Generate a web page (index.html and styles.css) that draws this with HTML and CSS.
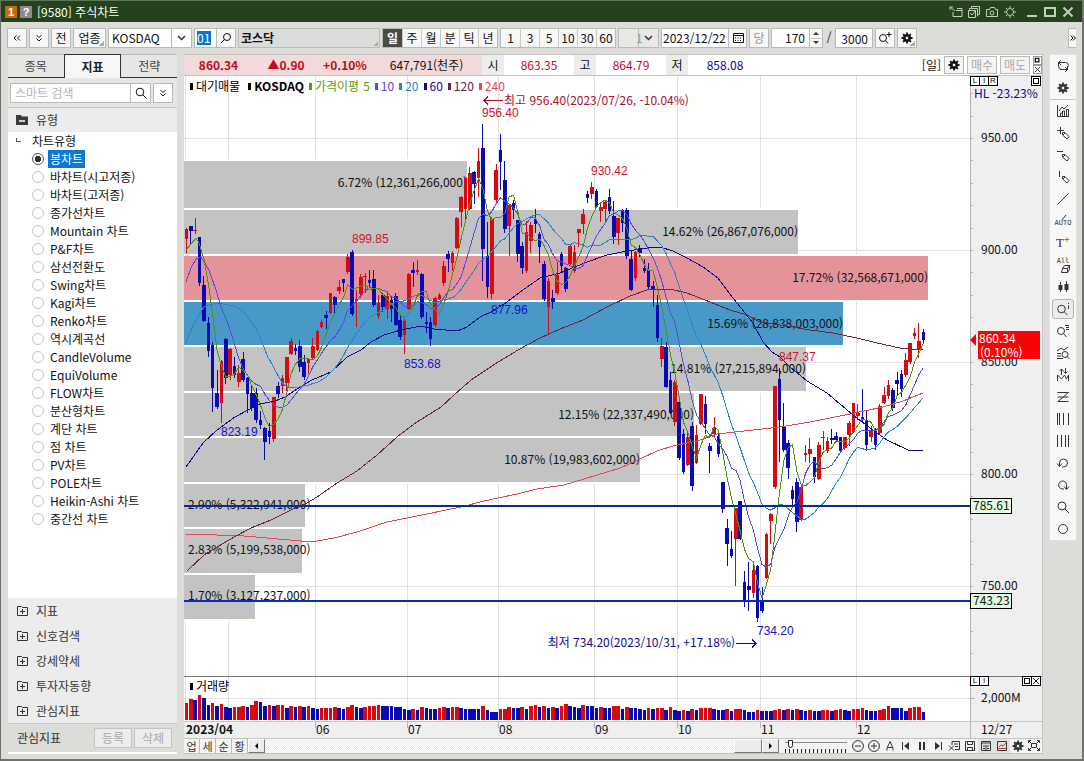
FILE: index.html
```html
<!DOCTYPE html>
<html lang="ko">
<head>
<meta charset="utf-8">
<title>[9580] 주식차트</title>
<link rel="stylesheet" href="styles.css">
</head>
<body>
<svg class="symbols" aria-hidden="true">
  <symbol id="gear" viewBox="0 0 12 12"><path d="M6 0.5v11M0.5 6h11M2.1 2.1l7.8 7.8M9.9 2.1l-7.8 7.8" stroke="currentColor" stroke-width="1.8"/><circle cx="6" cy="6" r="3.6" fill="currentColor"/><circle cx="6" cy="6" r="1.9" fill="#fff"/></symbol>
  <symbol id="sun" viewBox="0 0 12 12"><path d="M6 0v2M6 10v2M0 6h2M10 6h2M1.8 1.8l1.4 1.4M8.8 8.8l1.4 1.4M10.2 1.8l-1.4 1.4M3.2 8.8l-1.4 1.4"/><circle cx="6" cy="6" r="3.5"/></symbol>
  <symbol id="lens" viewBox="0 0 12 12"><circle cx="5" cy="5" r="3.8"/><path d="M7.8 7.8L11.5 11.5"/></symbol>
  <symbol id="lens-left" viewBox="0 0 12 12"><circle cx="7" cy="5" r="3.5"/><path d="M4.4 7.4L1 11"/></symbol>
  <symbol id="lens-plus" viewBox="0 0 14 12"><circle cx="5" cy="6" r="3.5"/><path d="M7.5 8.5L10 11.5M11 0v5M8.5 2.5h5"/></symbol>
  <symbol id="folder-add" viewBox="0 0 12 12"><path d="M1.5 1.500h4l1 1h5v8h-10zM4 6.500h5M6.500 4v5"/></symbol>
  <symbol id="calendar" viewBox="0 0 12 12"><path d="M1.5 1.5h10v9h-10zM1.5 3.5h10"/><path d="M3 6h7M3 8.5h7" stroke-dasharray="1 1.5"/></symbol>
  <symbol id="pencil" viewBox="0 0 14 14"><path d="M6.500 6.500h2.500l4 4-2 2.500-4.500-4zM9 7l-2 2"/></symbol>
  <symbol id="dchev" viewBox="0 0 12 12"><path d="M3.500 3L6 5.500 8.500 3M3.500 6.500L6 9l2.500-2.500"/></symbol>
  <symbol id="dleft" viewBox="0 0 12 12"><path d="M5.500 3.500L3 6l2.500 2.500M9 3.500L6.500 6 9 8.500"/></symbol>
  <symbol id="dright" viewBox="0 0 6 12"><path d="M.500 3.500L3 6 .500 8.500M3 3.500L5.500 6 3 8.500"/></symbol>
</svg>
<div class="window">
  <header class="titlebar">
    <span class="badge badge-num">1</span><span class="badge badge-help">?</span>
    <h1>[9580] 주식차트</h1>
    <div class="window-tools">
      <button aria-label="이동"><svg viewBox="0 0 14 12"><path d="M1 1l5 4M1 4V1h3M8 2.500h5v8H4V6M7 4.500h6"/></svg></button>
      <button aria-label="복사"><svg viewBox="0 0 14 12"><path d="M4.500 2.500V.500h8v8h-2M2.500 4.500V2.500h8v8M1.500 4.500h7v7h-7zM3 7l2 2 4-5"/></svg></button>
      <button aria-label="캡처"><svg viewBox="0 0 14 12"><path d="M1.500 3.500h3l1-2h4l1 2h2v7h-11z"/><circle cx="7" cy="7" r="2"/></svg></button>
      <button aria-label="설정"><svg><use href="#sun"/></svg></button>
      <button class="wide" aria-label="최소화"><svg viewBox="0 0 12 12"><path d="M1 10h10" stroke-width="2"/></svg></button>
      <button class="wide" aria-label="최대화"><svg viewBox="0 0 12 12"><path d="M1 2h10v8H1z" stroke-width="2"/></svg></button>
      <button class="wide" aria-label="닫기"><svg viewBox="0 0 12 12"><path d="M1.500 1.500l9 9M10.500 1.500l-9 9" stroke-width="2"/></svg></button>
    </div>
  </header>

  <div class="toolbar">
    <button class="tb" aria-label="접기"><svg class="ic"><use href="#dleft"/></svg></button>
    <button class="tb" aria-label="펼침"><svg class="ic"><use href="#dchev"/></svg></button>
    <button class="tb">전</button>
    <button class="tb corner market">업종</button>
    <select class="select-market" aria-label="시장"><option>KOSDAQ</option></select>
    <div class="code-box"><input value="01" aria-label="종목코드"><button aria-label="종목 검색"><svg class="ic"><use href="#lens-left"/></svg></button></div>
    <div class="stock-name corner">코스닥</div>
    <div class="segments"><button class="on">일</button><button>주</button><button>월</button><button>분</button><button>틱</button><button>년</button></div>
    <div class="segments"><button>1</button><button>3</button><button>5</button><button>10</button><button>30</button><button>60</button></div>
    <select class="select-unit" aria-label="단위"><option>1</option></select>
    <div class="date-box"><input value="2023/12/22" aria-label="날짜"><button aria-label="달력"><svg class="ic"><use href="#calendar"/></svg></button></div>
    <button class="tb" disabled>당</button>
    <div class="count-box"><input value="170" aria-label="표시 개수"><span class="spin"><button aria-label="증가"><i class="up"></i></button><button aria-label="감소"><i class="down"></i></button></span></div>
    <span class="slash">/</span>
    <input class="total" value="3000" aria-label="전체 개수">
    <button class="tb" aria-label="확대 검색"><svg class="ic ic-wide"><use href="#lens-plus"/></svg></button>
    <button class="tb corner" aria-label="설정"><svg class="ic"><use href="#gear"/></svg></button>
    <button class="tb more" aria-label="더보기"><svg><use href="#dright"/></svg></button>
  </div>

  <div class="content">
    <aside class="sidebar">
      <nav class="tabs"><button>종목</button><button class="on">지표</button><button>전략</button></nav>
      <div class="search"><input placeholder="스마트 검색" aria-label="스마트 검색"><button aria-label="검색"><svg class="ic"><use href="#lens"/></svg></button><button class="drop" aria-label="펼침"><svg class="ic"><use href="#dchev"/></svg></button></div>
      <h2 class="group-title"><svg viewBox="0 0 12 12"><path d="M0 1h5l1 1.500h6V11H0z" fill="#3a3a3c"/><path d="M3 7h6" stroke="#fff" stroke-width="1.500"/></svg>유형</h2>
      <div class="tree">
        <div class="tree-root">차트유형</div>
        <ul id="types"></ul>
      </div>
      <ul class="groups">
        <li><svg><use href="#folder-add"/></svg>지표</li>
        <li><svg><use href="#folder-add"/></svg>신호검색</li>
        <li><svg><use href="#folder-add"/></svg>강세약세</li>
        <li><svg><use href="#folder-add"/></svg>투자자동향</li>
        <li><svg><use href="#folder-add"/></svg>관심지표</li>
      </ul>
      <footer><span>관심지표</span><button disabled>등록</button><button disabled>삭제</button></footer>
    </aside>

    <main class="main">
      <section class="quote">
        <div class="now"><b>860.34</b><b>▲0.90</b><b>+0.10%</b><span>647,791(천주)</span></div>
        <span class="tag">시</span><span class="val">863.35</span>
        <span class="tag">고</span><span class="val">864.79</span>
        <span class="tag">저</span><span class="val low">858.08</span>
        <div class="quote-tools"><span>[일]</span><button class="q-gear" aria-label="설정"><svg class="ic"><use href="#gear"/></svg></button><button class="order" disabled>매수</button><button class="order" disabled>매도</button>
        <span class="mini"><button aria-label="확장"><svg viewBox="0 0 8 8"><path d="M1.500 1.500h4v4h-4z" stroke-width="1.500"/></svg></button><button aria-label="닫기"><svg viewBox="0 0 8 8"><path d="M1 1l6 6M7 1l-6 6"/></svg></button></span></div>
      </section>
      <section class="price">
        <svg id="price" viewBox="184 76 858 600"></svg>
        <div class="legend"><span class="k">대기매물</span><b class="k">KOSDAQ</b><span class="m5">가격이평</span><span class="plain5">5</span><span class="m10">10</span><span class="m20">20</span><span class="m60">60</span><span class="m120">120</span><span class="m240">240</span></div>
        <div class="axis-tools"><button>L</button><button>I</button><button>R</button><button class="last" aria-label="최대화"><i></i></button></div>
      </section>
      <section class="volume">
        <svg id="volume" viewBox="184 676 858 63"></svg>
        <div class="legend"><span class="k">거래량</span></div>
        <div class="axis-tools"><button>L</button><button>I</button><button class="last" aria-label="최대화"><i></i></button><button aria-label="닫기"><svg viewBox="0 0 8 8"><path d="M1 1l6 6M7 1l-6 6"/></svg></button></div>
      </section>
      <div class="bottom">
        <button class="bt">업</button><button class="bt">세</button><button class="bt">순</button><button class="bt">황</button>
        <div class="scroll"><button aria-label="왼쪽"><i class="left"></i></button><div class="track"><div class="thumb"></div></div><button aria-label="오른쪽"><i class="right"></i></button></div>
        <div class="zoomer"><input type="range" min="0" max="100" value="6" aria-label="확대 비율"></div>
        <div class="bottom-icons">
          <button aria-label="축소"><svg viewBox="0 0 12 12"><circle cx="6" cy="6" r="5.400"/><path d="M3 6h6"/></svg></button>
          <button aria-label="확대"><svg viewBox="0 0 12 12"><circle cx="6" cy="6" r="5.400"/><path d="M3 6h6M6 3v6"/></svg></button>
          <button aria-label="글자"><svg viewBox="0 0 12 12"><path d="M3 10.500V8L6 1.500 9 8v2.500M3.500 7.500h5"/></svg></button>
          <button aria-label="처음"><svg viewBox="0 0 12 12"><path d="M2.500 2v8"/><path d="M9 2v8L4 6z" fill="currentColor" stroke="none"/></svg></button>
          <button aria-label="정지"><svg viewBox="0 0 12 12"><path d="M4 2v8M8 2v8" stroke-width="2"/></svg></button>
          <button aria-label="끝"><svg viewBox="0 0 12 12"><path d="M9.500 2v8"/><path d="M3 2v8l5-4z" fill="currentColor" stroke="none"/></svg></button>
          <button aria-label="엑셀"><svg viewBox="0 0 12 12"><path d="M4 5V1.500h7.500v8H7M1 5.500l5 5M6 5.500l-5 5M6 4h4M7 6.500h3"/></svg></button>
          <button aria-label="저장"><svg viewBox="0 0 12 12"><path d="M1.500 1.500h9v9h-9zM3.500 1.500v3h5v-3M3.500 10.500v-3h5v3"/></svg></button>
          <button class="boxed" aria-label="표"><svg viewBox="0 0 12 12"><path d="M1.500 1.500h9v9h-9zM1.500 3h9M3 6h2M7 6h2M3 8.500h2M7 8.500h2M6 5v5"/></svg></button>
          <button class="boxed" aria-label="차트"><svg viewBox="0 0 12 12"><path d="M1.500 1.500h9v9h-9z"/><path d="M2 8.500h8M3 7l2-2 2 1 3-3" stroke="#c33"/></svg></button>
          <button aria-label="설정"><svg><use href="#gear"/></svg></button>
          <button aria-label="전체화면"><svg viewBox="0 0 12 12"><path d="M.500 3V.500H3M9 .500h2.500V3M11.500 8v2.500H9M3 10.500H.500V8M3.500 3.500h5v4h-5zM1 1l2 2M11 1L9 3M1 10l2-2M11 10L9 8"/></svg></button>
        </div>
      </div>
    </main>

    <nav class="rail">
      <button aria-label="새로고침"><svg viewBox="0 0 14 14"><path d="M2.500 7V3.500h7M5 1L2.500 3.500 5 6M9.500 3.500q3 0 3 3v1M11.500 7v3.500h-7M9 8l2.500 2.500L9 13M2.500 7q0 3.500 3 3.500"/></svg></button>
      <button aria-label="설정"><svg class="ic"><use href="#gear"/></svg></button>
      <hr>
      <button aria-label="지표추가"><svg viewBox="0 0 14 14"><path d="M1.500 1v11.500H13M4.500 12V9h2v3M6.500 12V7h2v5M10.500 12V5.500h2V12M3 7l3-4 2 2 4-4"/></svg></button>
      <button aria-label="십자선"><svg viewBox="0 0 14 14"><path d="M1 4.500h7M4.500 1v7"/><use href="#pencil"/></svg></button>
      <button aria-label="수평선"><svg viewBox="0 0 14 14"><path d="M1 3.500h6"/><use href="#pencil"/></svg></button>
      <button aria-label="수직선"><svg viewBox="0 0 14 14"><path d="M3.500 1v6"/><use href="#pencil"/></svg></button>
      <button aria-label="추세선"><svg viewBox="0 0 14 14"><path d="M1.500 12.500l11-11"/></svg></button>
      <button class="auto"><svg viewBox="0 0 14 5"><path d="M6 5l4-5"/></svg>AUTO</button>
      <button class="text-tool">T<sup>+</sup></button>
      <button class="all-tool">All<svg viewBox="0 0 14 8"><path d="M4.500 3.500h5v4h-6zM4.500 3.500l2-3h5l-2 3M11.500.500v4l-2 3"/></svg></button>
      <button aria-label="봉"><svg viewBox="0 0 14 14"><path d="M4.500 2v10M10.500 1v11" /><path d="M2.500 5h4v5h-4zM8.500 4h4v6h-4z" fill="currentColor" stroke="none"/></svg></button>
      <button class="active" aria-label="정보"><svg viewBox="0 0 14 14"><circle cx="5.500" cy="7" r="3.800"/><path d="M8.300 10l3.200 3M12.500 3.500V7M12.500 1v1"/></svg></button>
      <button aria-label="목록"><svg viewBox="0 0 14 14"><circle cx="5" cy="7" r="3.500"/><path d="M7.500 9.500l3 3.500M9 1.500h4M10 3.500h3M10 5.500h3"/></svg></button>
      <button aria-label="분석"><svg viewBox="0 0 14 14"><circle cx="9" cy="8.500" r="3"/><path d="M11 10.500l2.500 2.500M1 5l4-3 3 2 4-3M1 7.500h4M1 10h4M1 12.500h6"/></svg></button>
      <button aria-label="신호"><svg viewBox="0 0 14 14"><path d="M1.500 13V7l4 4 3-4 2 4 2-4v6M5.500 7V1M3.500 3l2-2 2 2M9.500 0v5M7.500 3.500l2 2 2-2"/></svg></button>
      <button aria-label="지그재그"><svg viewBox="0 0 14 14"><path d="M1.500 2.500h11L2 11.500M1.500 7h11M1.500 11.500h11"/></svg></button>
      <button aria-label="피보나치"><svg viewBox="0 0 14 14"><path d="M1.500 1v12M3.500 1v12M7.500 1v12M12.500 1v12"/></svg></button>
      <button aria-label="등간격"><svg viewBox="0 0 14 14"><path d="M1.500 1v12M5.500 1v12M9.500 1v12M12.500 1v12"/></svg></button>
      <button aria-label="실행취소"><svg viewBox="0 0 14 14"><path d="M3.500 7a4 4 0 1 1 4 4H6M1 7.500l2.500 3 2.500-3M3.500 7v3"/></svg></button>
      <button aria-label="다시실행"><svg viewBox="0 0 14 14"><path d="M10.500 8a4 4 0 1 0-4 3H8M8 8.500l2.500 3 2.500-3M10.500 7v4"/></svg></button>
      <button aria-label="검색"><svg viewBox="0 0 14 14"><circle cx="6" cy="6" r="4"/><path d="M9 9l4 4"/></svg></button>
      <button aria-label="원"><svg viewBox="0 0 14 14"><circle cx="7" cy="7" r="4.500"/></svg></button>
    </nav>
  </div>
</div>
<script src="chart.js"></script>
</body>
</html>
```

FILE: styles.css
```css
* { box-sizing: border-box; }
body {
  margin: 0;
  font: 12px/16px "Noto Sans CJK KR", "Liberation Sans", sans-serif;
  color: #111;
  background: #dcdcd8;
}
button, input, select { font: inherit; color: inherit; margin: 0; padding: 0; border-radius: 0; }
button { border: 0; background: none; display: flex; align-items: center; justify-content: center; }
ul { list-style: none; margin: 0; padding: 0; }
svg { fill: none; stroke: currentColor; }
.symbols { position: absolute; width: 0; height: 0; }
.ic { width: 12px; height: 12px; }
.ic-wide { width: 14px; }

.window {
  min-height: 100vh;
  display: flex;
  flex-direction: column;
  border: 1px solid #70706c;
  border-top-color: #5f7458;
  border-bottom-width: 2px;
  border-right-width: 2px;
}

/* title bar */
.titlebar { height: 21px; display: flex; align-items: center; background: #24421c; color: #fff; padding: 0 5px 0 4px; }
.titlebar h1 { margin: 0 0 0 5px; font-size: 12px; font-weight: 400; }
.badge { width: 12px; height: 12px; margin-right: 3px; font: bold 11px/12px "Liberation Sans", sans-serif; text-align: center; }
.badge-num { background: #c96a06; }
.badge-help { background: #8c8c8c; margin-right: 0; }
.window-tools { margin-left: auto; display: flex; color: #c4cdbf; }
.window-tools button { width: 18px; height: 16px; }
.window-tools svg { width: 14px; height: 12px; }
.window-tools .wide:nth-child(5) { margin-left: 4px; }

/* toolbar */
.toolbar { height: 32px; display: flex; align-items: center; gap: 2px; padding: 0 6px; }
.toolbar > * { height: 20px; flex: none; }
.tb { width: 20px; border: 1px solid #b9b9b7; background: #f7f7f7; }
.tb:disabled { color: #999; }
.corner { background-image: linear-gradient(135deg, transparent 50%, #aaa 50%); background-size: 5px 5px; background-repeat: no-repeat; background-position: right 1px bottom 1px; }
.market { width: 33px; }
.toolbar select { appearance: none; border: 1px solid #b9b9b7; background: #fff url("data:image/svg+xml,%3Csvg xmlns='http://www.w3.org/2000/svg' width='20' height='18'%3E%3Cpath d='M.5 0v18' stroke='%23b9b9b7'/%3E%3Cpath d='M7 7l3.500 3.500L14 7' fill='none' stroke='%23333' stroke-width='1.500'/%3E%3C/svg%3E") no-repeat right center; }
.select-market { width: 84px; padding-left: 3px; }
.toolbar .select-unit { width: 41px; padding-left: 17px; color: #999; background-color: #e8e8e6; }
.code-box, .date-box, .count-box { display: flex; border: 1px solid #b9b9b7; background: #fff; }
.code-box { width: 42px; }
.code-box input { width: 14px; margin: 2px 5px 2px 2px; border: 0; background: #0a74d6; color: #fff; line-height: 14px; }
.code-box button { width: 19px; border-left: 1px solid #b9b9b7; background: #f7f7f7; }
.stock-name { width: 142px; border: 1px solid #b9b9b7; background-color: #dcdcda; font-weight: 700; line-height: 18px; padding-left: 2px; }
.segments { display: flex; border: 1px solid #b9b9b7; background: #f7f7f7; }
.segments button { width: 19px; border-left: 1px solid #c9c9c7; }
.segments button:first-child { border-left: 0; }
.segments .on { background: #4a4a4a; color: #fff; font-weight: 700; }
.date-box { width: 86px; }
.date-box input { width: 66px; border: 0; padding-left: 1px; }
.date-box button { width: 18px; border-left: 1px solid #b9b9b7; background: #f7f7f7; }
.count-box { width: 52px; }
.count-box input { width: 38px; border: 0; border-right: 1px solid #b9b9b7; text-align: right; padding-right: 4px; }
.spin { flex: 1; display: flex; flex-direction: column; background: #f7f7f7; }
.spin button { flex: 1; }
.spin button + button { border-top: 1px solid #c9c9c7; }
.spin i, .scroll i { border: 3px solid transparent; }
.spin .up { border-bottom-color: #333; border-top: 0; }
.spin .down { border-top-color: #333; border-bottom: 0; }
.slash { width: 8px; text-align: center; line-height: 18px; }
.total { width: 38px; border: 1px solid #b9b9b7; background: #fff; text-align: right; padding-right: 4px; line-height: 18px; }
.toolbar .more { width: 8px; margin-left: auto; border-right: 0; }
.more svg { width: 6px; height: 12px; }

/* columns */
.content { flex: 1; display: flex; align-items: stretch; padding: 0 5px 5px 7px; }
.sidebar { width: 169px; flex: none; display: flex; flex-direction: column; background: #ececec; border-bottom: 2px solid #fff; margin-right: 7px; }
.tabs { display: flex; height: 24px; }
.tabs button { flex: 1; background: #e6e6e4; border-top: 1px solid #b9b9b7; border-bottom: 1px solid #333; color: #444; }
.tabs .on { border: 1px solid #333; border-bottom: 0; background: #f7f7f7; font-weight: 700; color: #222; }
.search { display: flex; padding: 5px 4px 4px 2px; height: 30px; border-bottom: 1px solid #c4c4c2; background: #e6e6e4; }
.search input { flex: 1; min-width: 0; border: 1px solid #b9b9b7; background: #fff; padding-left: 4px; }
.search input::placeholder { color: #b4b4bc; opacity: 1; }
.search button { width: 20px; border: 1px solid #b9b9b7; border-left: 0; background: #fff; }
.search .drop { margin-left: 2px; border-left: 1px solid #b9b9b7; }
.group-title { display: flex; align-items: center; gap: 8px; height: 24px; margin: 0; padding-left: 8px; font-size: 12px; font-weight: 400; color: #333; }
.group-title svg { width: 12px; height: 12px; stroke: none; }
.tree { flex: 1; background: #fff; }
.tree-root { height: 18px; line-height: 18px; padding-left: 24px; background: linear-gradient(#555, #555) 8px 6px / 1px 4px no-repeat, linear-gradient(#555, #555) 8px 9px / 5px 1px no-repeat; }
.tree li label { display: flex; align-items: center; height: 18px; padding-left: 24px; }
.tree input { appearance: none; width: 12px; height: 12px; margin-right: 4px; border: 1px solid #c4c4c4; border-radius: 50%; background: #fff; }
.tree input:checked { border-color: #555; background: radial-gradient(circle, #333 3px, #fff 3px); }
.tree span { padding: 0 2px; line-height: 18px; }
.tree input:checked + span { background: #0a78d7; color: #fff; }
.groups li { display: flex; align-items: center; gap: 8px; height: 25px; padding-left: 8px; color: #333; }
.groups svg { width: 12px; height: 12px; }
.sidebar footer { display: flex; align-items: center; gap: 2px; height: 29px; padding: 0 5px 0 9px; background: #dcdcd8; border-top: 1px solid #c9c9c7; color: #333; }
.sidebar footer span { flex: 1; }
.sidebar footer button { width: 38px; height: 20px; border: 1px solid #c4c4c2; background: #ececec; color: #aaa; }

.main { flex: 1; min-width: 0; display: flex; flex-direction: column; background: #fff; border-right: 1px solid #c4c4c2; margin-right: 6px; }

/* quote bar */
.quote { height: 22px; display: flex; align-items: stretch; line-height: 20px; border: 1px solid #c4c4c2; border-width: 1px 0; }
.now { width: 298px; display: grid; grid-template-columns: 69px 66px 52px 1fr; background: #f2dadb; text-align: center; }
.now b { color: #c20a1c; }
.tag { width: 22px; text-align: center; background: #ececec; }
.val { width: 70px; text-align: center; color: #c20a1c; }
.low { color: #0b0b90; padding-left: 4px; }
.quote-tools { margin-left: auto; display: flex; align-items: center; gap: 3px; }
.quote-tools .q-gear, .order { height: 18px; border: 1px solid #b9b9b7; background: #f4f4f4; }
.q-gear { width: 20px; }
.order { width: 30px; color: #aaa; }
.mini { display: flex; flex-direction: column; }
.mini button { width: 9px; height: 9px; border: 1px solid #999; }
.mini svg { width: 7px; height: 7px; }

/* charts */
.price, .volume { position: relative; }
#price, #volume { display: block; width: 100%; stroke: none; }
.price { flex: 1; }
.legend { position: absolute; left: 5px; top: 2px; display: flex; gap: 4px; line-height: 16px; }
.legend > :not(.plain5)::before { content: ""; display: inline-block; width: 3px; height: 7px; margin: 0 3px 1px 1px; background: currentColor; }
.legend .k { color: #000; }
.legend span.k { margin-right: 3px; }
.m5, .plain5 { color: #5a9a14; }
.m10 { color: #5a4ad8; }
.m20 { color: #2a86c0; }
.m60 { color: #0b0b90; }
.m120 { color: #6a2440; }
.m240 { color: #e04858; }
.axis-tools { position: absolute; right: 1px; top: 0; width: 71px; display: flex; }
.axis-tools button { width: 10px; height: 10px; margin-right: -1px; border: 1px solid #000; background: #fff; font: 8px/8px "Liberation Sans", sans-serif; }
.axis-tools .last { margin-left: auto; }
.axis-tools i { width: 6px; height: 6px; border: 1px solid #000; }
.axis-tools svg { width: 8px; height: 8px; }
.axis-tools button:last-child { margin-right: 0; }

/* bottom bar */
.bottom { height: 15px; display: flex; background: #f4f4f4; border-bottom: 1px solid #c4c4c2; color: #333; }
.bt { width: 16px; border: 1px solid #b9b9b7; border-width: 0 1px 0 0; font-size: 11px; line-height: 14px; }
.scroll { flex: 1; display: flex; }
.scroll button { width: 17px; background: #ececec; border: 1px solid #fff; border-right-color: #777; border-bottom-color: #777; }
.scroll .left { border-right-color: #000; border-left: 0; }
.scroll .right { border-left-color: #000; border-right: 0; }
.track { flex: 1; display: flex; justify-content: flex-end; background: repeating-conic-gradient(#ebebeb 0 25%, #fff 0 50%) 0 0 / 2px 2px; }
.thumb { width: 28px; background: #ececec; border: 1px solid #fff; border-right-color: #777; border-bottom-color: #777; }
.zoomer { width: 62px; margin-left: 6px; margin-right: 3px; background: repeating-linear-gradient(90deg, #222 0 1px, transparent 1px 4px) 0 10px / 100% 4px no-repeat; }
.zoomer input { appearance: none; display: block; width: 100%; height: 9px; background: linear-gradient(#888, #888) 0 3px / 100% 1px no-repeat; }
.zoomer input::-webkit-slider-thumb { appearance: none; width: 5px; height: 8px; border: 1px solid #222; border-radius: 0 0 3px 3px; background: #fff; }
.bottom-icons { display: flex; }
.bottom-icons button { width: 16px; }
.bottom-icons svg { width: 12px; height: 12px; }
.boxed { background: #e2e2e2; }

/* tool rail */
.rail { width: 28px; flex: none; align-self: flex-start; display: flex; flex-direction: column; align-items: center; background: #f8f8f8; border: 1px solid #e2e2e0; color: #333; }
.rail button { width: 22px; height: 22px; }
.rail button > svg:not(.ic) { width: 14px; height: 14px; }
.rail hr { width: 100%; height: 1px; margin: 0; border: 0; background: #c4c4c2; }
.rail .active { height: 20px; margin: 1px 0; border: 1px solid #b4b4b4; border-radius: 3px; background: #ececec; }
.rail .auto, .rail .all-tool { flex-direction: column; font: 7px/7px "DejaVu Sans Mono", monospace; }
.rail .auto > svg:not(.ic) { height: 5px; }
.rail .all-tool > svg:not(.ic) { height: 8px; margin-left: 4px; }
.rail .text-tool { font: 13px/16px "Liberation Serif", serif; }
.text-tool sup { font-size: 11px; line-height: 6px; margin-bottom: 8px; }

/* chart drawing */
rect, polyline { shape-rendering: crispEdges; }
text { font: 12px "Noto Sans CJK KR", sans-serif; fill: #111; }
.peak { font: 12px "Liberation Sans", sans-serif; }
.t-red { fill: #d0142a; }
.t-note { fill: #a8122c; }
.t-blue { fill: #1212c8; }
.t-navy { fill: #0b0b90; }
.t-white { fill: #fff; }
.t-bold { font-weight: 700; }
```

FILE: chart.js
```js
const types = ["봉차트", "바차트(시고저종)", "바차트(고저종)", "종가선차트", "Mountain 차트", "P&F차트", "삼선전환도", "Swing차트", "Kagi차트", "Renko차트", "역시계곡선", "CandleVolume", "EquiVolume", "FLOW차트", "분산형차트", "계단 차트", "점 차트", "PV차트", "POLE차트", "Heikin-Ashi 차트", "중간선 차트"];
const list = document.getElementById("types");
types.forEach((name, i) => {
  const li = document.createElement("li");
  const label = document.createElement("label");
  const radio = document.createElement("input");
  radio.type = "radio";
  radio.name = "type";
  radio.checked = i === 0;
  const span = document.createElement("span");
  span.textContent = name;
  label.append(radio, span);
  li.append(label);
  list.append(li);
});

const NS = "http://www.w3.org/2000/svg";
let target = document.getElementById("price");
function add(tag, attrs, text) {
  const el = document.createElementNS(NS, tag);
  for (const k in attrs) el.setAttribute(k, attrs[k]);
  if (text) el.textContent = text;
  target.append(el);
}
const rect = (x, y, w, h, fill) => add("rect", { x, y, width: w, height: h, fill });
const label = (x, y, s, cls = "", anchor = "start") => add("text", { x, y, class: cls, "text-anchor": anchor }, s);
const line = (points, color) => add("polyline", { points, fill: "none", stroke: color, "stroke-width": 1 });

const RED = "#d80a10", BLUE = "#0a0ab4";
const months = [228, 315, 407, 498, 594, 677, 760, 856];

/* candles: direction, high, body top, body bottom, low */
const candles = `r228,229,239,253 b226,226,231,245 r218,230,231,234 b237,237,283,286 b276,285,321,322 b317,323,351,357 b342,345,388,412 b370,393,407,409 r360,361,403,423 b338,339,378,384
r348,349,375,380 b357,366,375,378 r365,373,382,387 b352,359,380,382 b377,378,394,413 b385,393,408,411 b388,393,420,423 b411,420,425,429 b427,428,442,460 b423,431,437,444
r397,397,439,442 b382,386,394,398 r375,378,386,393 r357,357,383,391 r338,341,354,355 b344,348,351,355 b340,346,367,372 b355,362,377,380 r358,359,363,374 r338,346,358,359
r330,331,350,351 r320,322,327,328 b311,315,318,329 r293,293,313,314 b296,297,305,314 r280,287,291,294 b279,279,283,292 r254,257,272,274 b250,252,314,316 r290,299,301,327
r274,277,294,298 r273,276,277,293 b270,280,283,287 b270,279,305,307 r295,303,316,319 b293,295,307,312 r292,296,309,319 b297,300,309,322 b293,296,325,326 b316,320,337,340
r319,321,335,354 r273,274,309,310 b262,270,273,287 r260,270,272,275 b273,274,317,319 b312,322,324,333 b317,322,339,346 r297,298,325,327 r293,295,299,300 r261,266,283,286
b251,254,259,272 r251,253,263,271 r217,218,248,249 r196,197,212,227 r177,178,209,219 r167,173,209,210 b171,172,184,204 r148,161,178,197 b124,148,249,281 b222,256,287,298
r217,219,294,299 r164,170,200,203 b134,150,162,190 b161,180,229,233 r204,205,226,256 b200,203,210,219 b220,220,254,262 b242,246,268,274 r221,232,271,273 r222,225,241,253
b209,219,224,233 b232,234,247,263 b261,264,299,301 r278,281,307,334 b290,298,302,309 r262,275,293,295 b252,254,266,272 b267,268,289,292 r245,246,264,266 r245,252,271,273
r229,229,233,247 r209,214,224,234 b191,194,198,203 r182,187,194,199 b189,191,207,208 r203,207,211,222 r200,202,209,221 b189,197,211,214 b201,216,237,244 r218,218,233,245
b209,210,223,232 b208,210,256,259 b250,259,290,291 r251,252,278,281 b245,248,253,257 b259,268,271,273 b263,270,287,290 b281,286,290,307 b295,305,338,342 r338,346,359,367
b342,347,387,388 b372,380,413,414 r380,382,422,426 b400,402,458,460 b429,434,472,474 r431,437,465,466 b422,426,486,491 r425,435,463,464 r394,394,424,425 b396,404,424,434
b443,446,451,473 r417,428,434,438 b432,436,454,457 b482,482,509,513 b519,528,544,566 b531,549,556,558 r508,508,539,586 b501,501,539,540 b571,582,601,607 b562,586,590,611
r562,570,593,598 b565,566,618,622 b587,600,611,613 r533,534,578,579 r513,514,521,544 r386,386,487,489 b368,379,420,462 b403,426,450,452 b440,443,468,479 b486,490,499,507
b478,482,522,532 r487,487,520,521 r445,453,455,462 r438,449,454,463 b457,457,477,483 r442,445,479,480 r431,437,438,450 r437,441,451,453 b429,438,440,444 b432,436,440,442
b437,437,451,453 r437,437,448,450 r421,423,435,446 r403,403,432,433 r404,413,416,420 b389,417,419,423 b411,420,445,451 r426,431,437,442 b428,429,445,450 r404,406,433,434
r387,395,403,404 r380,385,396,399 b388,390,408,411 b372,380,384,396 b370,374,389,397 r353,360,375,377 r343,343,362,364 r328,333,336,339 r323,341,350,358 b329,332,340,344`
  .split(/\s+/).map(s => [s[0], ...s.slice(1).split(",").map(Number)]);
const cx = i => 186.5 + 4.36 * i;
const closes = candles.map(c => c[0] === "r" ? c[2] : c[3]);

/* price grid and axis background */
rect(970, 76, 72, 600, "#efefef");
rect(970, 76, 1, 600, "#b4b4b4");
function drawVGrid(y, h) {
  rect(185, y, 1, h, "#e0e0e0");
  months.forEach(x => rect(x, y, 1, h, "#e0e0e0"));
}
drawVGrid(76, 600);
[138, 250, 362, 474, 586].forEach(y => rect(184, y, 790, 1, "#e0e0e0"));
for (let y = 93.2; y < 670; y += 22.4) rect(970, Math.round(y), 3, 1, "#b4b4b4");

/* waiting volume by price */
[[161, 47, 467, "6.72% (12,361,266,000)"], [210, 44, 798, "14.62% (26,867,076,000)"], [256, 44, 928, "17.72% (32,568,671,000)", "#e5939b"],
 [302, 43, 843, "15.69% (28,838,003,000)", "#4899c8"], [347, 44, 806, "14.81% (27,215,894,000)"], [393, 43, 694, "12.15% (22,337,490,000)"],
 [438, 44, 640, "10.87% (19,983,602,000)"], [484, 43, 305, "2.90% (5,322,941,000)"], [529, 44, 302, "2.83% (5,199,538,000)"], [575, 44, 255, "1.70% (3,127,237,000)"]]
  .forEach(([y, h, right, s, fill = "#c3c3c3"]) => {
    rect(184, y - 2, right - 184, h + 4, "#fff");
    rect(184, y, right - 184, h, fill);
    if (right < 320) label(188, y + 25, s);
    else label(right, y + 26, s, "", "end");
  });

candles.forEach(([dir, hi, top, bottom, lo], i) => {
  const color = dir === "r" ? RED : BLUE;
  const x0 = Math.round(cx(i) - 1.8), x1 = Math.round(cx(i) + 1.8);
  rect(Math.floor(cx(i)), hi, 1, lo - hi, color);
  rect(x0, top, x1 - x0, Math.max(1, bottom - top), color);
});

/* moving averages; the leading part comes from earlier sessions */
function average(n, lead, color) {
  const pts = [...lead];
  for (let i = n - 1; i < closes.length; i++) {
    const mean = closes.slice(i - n + 1, i + 1).reduce((a, b) => a + b) / n;
    pts.push(`${cx(i).toFixed(1)},${mean.toFixed(1)}`);
  }
  line(pts.join(" "), color);
}
line("186,534 217,535 244,536 267,538 301,541 317,541 334,538 357,532 387,522 417,516 461,507 484,501 517,494 537,489 564,485 584,479 620,468 640,459 657,451 673,446 697,441 717,434 753,430 780,427 810,422 850,414 883,407 903,401 923,393", "#e04858");
line("187,571 204,555 217,547 236,536 251,528 271,520 291,510 307,503 317,497 337,483 357,471 377,455 397,437 417,422 441,407 454,395 471,380 495,364 518,350 540,338 560,329 583,320 607,307 630,296 650,289 670,289 687,293 710,302 730,310 747,315 760,322 787,326 810,330 833,333 857,338 877,343 900,348 923,350", "#6a2440");
line("186,467 203,443 217,430 235,417 250,409 260,404 275,401 285,397 300,387 312,380 331,372 347,357 361,350 371,342 384,335 401,330 421,326 434,329 457,331 467,327 480,317 493,311 507,302 520,292 540,278 560,273 587,262 607,255 627,251 647,248 660,247 673,251 687,258 703,267 718,278 733,298 753,323 763,342 772,352 780,357 790,367 807,381 827,393 853,415 870,428 887,440 908,450 923,450", "#0b0b90");
average(20, ["186,343", "194,323", "204,307", "217,303", "234,306", "244,312", "256,328", "264,347", "268,358"], "#2a86c0");
average(10, ["186,282", "191,268", "196,259", "201,257", "209,270", "217,293", "221,307"], "#5a4ad8");
average(5, ["186,250", "191,244", "196,238", "199,243"], "#4c9410");

/* level lines */
rect(184, 505, 786, 2, "#0a2a94");
rect(184, 600, 786, 2, "#0a2ab4");

/* peaks and notes */
[[482, 117, "956.40"], [591, 175, "930.42"], [352, 243, "899.85"], [779, 361, "847.37"]].forEach(([x, y, s]) => label(x, y, s, "peak t-red"));
[[491, 314, "877.96"], [404, 368, "853.68"], [221, 436, "823.19"], [757, 635, "734.20"]].forEach(([x, y, s]) => label(x, y, s, "peak t-blue"));
label(504, 105, "최고 956.40(2023/07/26, -10.04%)", "t-note");
line("503,100.5 484,100.5 488,96.5 484,100.5 488,104.5", "#a8122c");
label(735, 647, "최저 734.20(2023/10/31, +17.18%)", "t-navy", "end");
line("736,643.5 756,643.5 752,639.5 756,643.5 752,647.5", "#0b0b90");

/* price axis */
label(974, 98, "HL -23.23%", "t-navy");
[[142, "950.00"], [254, "900.00"], [366, "850.00"], [478, "800.00"], [590, "750.00"]].forEach(([y, s]) => label(981, y, s));
[[498, "785.61"], [593, "743.23"]].forEach(([y, s]) => {
  add("rect", { x: 970.5, y: y + 0.5, width: 41, height: 15, fill: "#e2fbe2", stroke: "#000" });
  label(973, y + 12, s);
});
rect(978, 331, 62, 28, "#f80404");
add("path", { d: "M970 340l6-6v12z", fill: "#d80a10" });
label(979, 343, "860.34", "t-white");
label(980, 357, "(0.10%)", "t-white");

/* volume panel */
target = document.getElementById("volume");
drawVGrid(677, 44);
rect(184, 698, 786, 1, "#e0e0e0");
rect(970, 677, 72, 62, "#efefef");
rect(184, 721, 786, 18, "#efefef");
rect(184, 676, 858, 1, "#777");
rect(184, 721, 858, 1, "#c4c4c4");
rect(184, 738, 858, 1, "#c4c4c4");
rect(970, 677, 1, 62, "#b4b4b4");
rect(970, 698, 5, 1, "#b4b4b4");
const volumes = `17 21 20 25 22 15 17 14 16 13 12 13 13 14 13 15 19 18 14 15 14 15 15 12 14 13 14 13 14 12 11 12 12 12 13 12 11 13 15 13 12
13 14 14 15 14 14 14 13 13 11 10 11 10 13 12 11 11 12 13 12 13 13 12 11 11 11 11 14 10 8
8 11 11 13 12 12 13 11 14 15 13 14 12 13 12 14 16 14 13 12 15 14 14 12 13 12 12 14 14 11
13 12 12 11 10 12 11 12 12 10 13 10 9 10 9 11 10 12 12 12 11 10 10 11 9 11 11
10 8 8 10 9 9 9 10 11 10 11 10 11 10 9 10 9 9 10 10 9 10 11 10 9 11 11 12 10 9 9 10 11 14 12 12 12 9 12 13 13 8`
  .split(/\s+/).map(Number);
let direction = RED;
volumes.forEach((v, i) => {
  const x0 = Math.round(cx(i) - 1.8), x1 = Math.round(cx(i) + 1.8);
  if (i && v !== volumes[i - 1]) direction = v > volumes[i - 1] ? RED : BLUE;
  rect(x0, 720 - v, x1 - x0, v, direction);
});
["06", "07", "08", "09", "10", "11", "12"].forEach((m, i) => {
  rect(months[i + 1], 722, 1, 6, "#b4b4b4");
  label(months[i + 1] + 1, 734, m);
});
label(186, 734, "2023/04", "t-bold");
label(981, 702, "2,000M");
label(981, 734, "12/27");
```
